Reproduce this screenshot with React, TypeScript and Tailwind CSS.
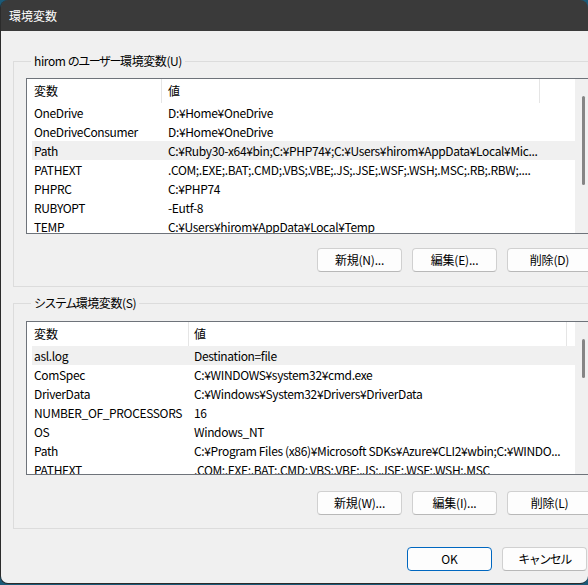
import React from 'react';

interface Row {
  name: string;
  value: string;
}

const userVars: Row[] = [
  { name: 'OneDrive', value: 'D:¥Home¥OneDrive' },
  { name: 'OneDriveConsumer', value: 'D:¥Home¥OneDrive' },
  { name: 'Path', value: 'C:¥Ruby30-x64¥bin;C:¥PHP74¥;C:¥Users¥hirom¥AppData¥Local¥Mic...' },
  { name: 'PATHEXT', value: '.COM;.EXE;.BAT;.CMD;.VBS;.VBE;.JS;.JSE;.WSF;.WSH;.MSC;.RB;.RBW;....' },
  { name: 'PHPRC', value: 'C:¥PHP74' },
  { name: 'RUBYOPT', value: '-Eutf-8' },
  { name: 'TEMP', value: 'C:¥Users¥hirom¥AppData¥Local¥Temp' },
];

const systemVars: Row[] = [
  { name: 'asl.log', value: 'Destination=file' },
  { name: 'ComSpec', value: 'C:¥WINDOWS¥system32¥cmd.exe' },
  { name: 'DriverData', value: 'C:¥Windows¥System32¥Drivers¥DriverData' },
  { name: 'NUMBER_OF_PROCESSORS', value: '16' },
  { name: 'OS', value: 'Windows_NT' },
  { name: 'Path', value: 'C:¥Program Files (x86)¥Microsoft SDKs¥Azure¥CLI2¥wbin;C:¥WINDO...' },
  { name: 'PATHEXT', value: '.COM;.EXE;.BAT;.CMD;.VBS;.VBE;.JS;.JSE;.WSF;.WSH;.MSC' },
];

interface VarListProps {
  rows: Row[];
  selected: number;
  height: string; // full class
  nameCol: string; // full width class
  valuePad: string;
  thumb: string; // thumb margin + height classes
}

const VarList: React.FC<VarListProps> = ({ rows, selected, height, nameCol, valuePad, thumb }) => (
  <div className={`flex w-[575px] ${height} border border-[#6e737a] bg-white overflow-hidden`}>
    {/* columns */}
    <div className="w-[548px] shrink-0 pl-[5px] overflow-hidden">
      <div className="flex h-[24px] items-center">
        <div className={`${nameCol} shrink-0 h-full pl-[2px] flex items-center border-r border-[#e5e5e5]`}>変数</div>
        <div className={`w-[378px] shrink-0 h-full ${valuePad} flex items-center border-r border-[#e5e5e5]`}>値</div>
      </div>
      {rows.map((r, i) => (
        <div
          key={r.name + i}
          className={`flex h-[19px] leading-[19px] tracking-[-0.35px] ${i === selected ? 'bg-[#f0f0f0]' : ''}`}
        >
          <div className={`${nameCol} shrink-0 pl-[2px] whitespace-nowrap overflow-hidden`}>{r.name}</div>
          <div className={`w-[378px] shrink-0 ${valuePad} whitespace-nowrap overflow-hidden`}>{r.value}</div>
        </div>
      ))}
    </div>

    {/* Scrollbar */}
    <div className="w-[17px] shrink-0 bg-[#f0f0f0]">
      <div className={`ml-[7px] w-[3px] rounded-full bg-[#858585] ${thumb}`} />
    </div>
  </div>
);

// kana in the Windows UI font are narrower than full width
const Kana: React.FC<{ children: React.ReactNode }> = ({ children }) => (
  <span className="tracking-[-1.5px]">{children}</span>
);

const Button: React.FC<{ children: React.ReactNode; primary?: boolean }> = ({ children, primary }) => (
  <button
    className={`w-[85px] h-[24px] shrink-0 rounded-[4px] bg-[#fdfdfd] border text-[12px] text-black tracking-[-0.2px] flex items-center justify-center ${
      primary ? 'border-[#0067c0]' : 'border-[#d0d0d0] border-b-[#b8b8b8]'
    }`}
  >
    {children}
  </button>
);

const App: React.FC = () => {
  return (
    <div className="w-[588px] h-[585px] bg-[#1b5a78] text-[12px] text-black font-[Noto_Sans_CJK_JP,sans-serif]">
      <div className="h-[584px] rounded-lg overflow-hidden border-l border-b border-[#2b2b2b] flex flex-col">
        {/* Title bar */}
        <div className="h-[31px] shrink-0 bg-[#3a3a3a] text-white flex items-center pl-[8px]">環境変数</div>

        {/* Body */}
        <div className="flex-1 bg-[#f0f0f0] pt-[22px] pl-[12px] overflow-hidden">
          {/* User variables */}
          <fieldset className="w-[610px] border border-[#dcdcdc] pl-[12px] pb-[14px]">
            <legend className="ml-[5px] px-[3px] leading-[16px] tracking-[-0.4px]">
              hirom <Kana>のユーザー</Kana>環境変数(U)
            </legend>
            <div className="mt-[9px]">
              <VarList
                rows={userVars}
                selected={2}
                height="h-[156px]"
                nameCol="w-[130px]"
                valuePad="pl-[6px]"
                thumb="mt-[17px] h-[89px]"
              />
            </div>
            <div className="flex gap-[10px] pl-[291px] mt-[14px]">
              <Button>新規(N)...</Button>
              <Button>編集(E)...</Button>
              <Button>削除(D)</Button>
            </div>
          </fieldset>

          {/* System variables */}
          <fieldset className="w-[610px] mt-[8px] border border-[#dcdcdc] pl-[12px] pb-[13px]">
            <legend className="ml-[5px] px-[3px] leading-[16px] tracking-[-0.4px]">
              <Kana>システム</Kana>環境変数(S)
            </legend>
            <div className="mt-[10px]">
              <VarList
                rows={systemVars}
                selected={0}
                height="h-[154px]"
                nameCol="w-[157px]"
                valuePad="pl-[5px]"
                thumb="mt-[17px] h-[39px]"
              />
            </div>
            <div className="flex gap-[10px] pl-[291px] mt-[16px]">
              <Button>新規(W)...</Button>
              <Button>編集(I)...</Button>
              <Button>削除(L)</Button>
            </div>
          </fieldset>

          {/* Dialog buttons */}
          <div className="flex gap-[10px] pl-[394px] mt-[18px]">
            <Button primary>OK</Button>
            <Button>
              <Kana>キャンセル</Kana>
            </Button>
          </div>
        </div>
      </div>
    </div>
  );
};

export default App;
